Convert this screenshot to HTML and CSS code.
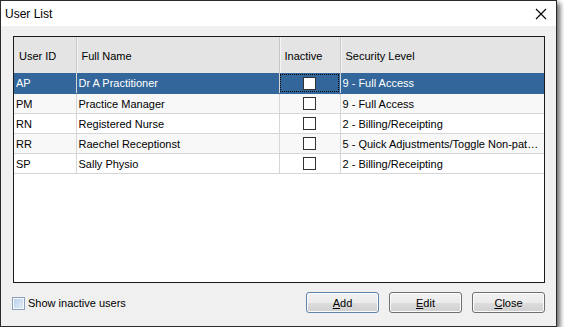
FILE: index.html
```html
<!DOCTYPE html>
<html>
<head>
    <title>User List</title>
    <link rel="stylesheet" href="styles.css">
</head>
<body>
    <div class="window">
        <div class="titlebar">
            <span class="title">User List</span>
            <span class="close-x">
                <svg width="12" height="12" viewBox="0 0 12 12"><path d="M1 1 L11 11 M11 1 L1 11" stroke="#000" stroke-width="1.1" fill="none"/></svg>
            </span>
        </div>
        <div class="content">
            <div class="grid">
                <table>
                    <colgroup>
                        <col class="c-id"><col class="c-name"><col class="c-inactive"><col class="c-level">
                    </colgroup>
                    <thead>
                        <tr>
                            <th>User ID</th>
                            <th>Full Name</th>
                            <th>Inactive</th>
                            <th>Security Level</th>
                        </tr>
                    </thead>
                    <tbody>
                        <tr class="selected">
                            <td>AP</td>
                            <td>Dr A Practitioner</td>
                            <td class="chk focus"><span class="box"></span></td>
                            <td>9 - Full Access</td>
                        </tr>
                        <tr class="alt">
                            <td>PM</td>
                            <td>Practice Manager</td>
                            <td class="chk"><span class="box"></span></td>
                            <td>9 - Full Access</td>
                        </tr>
                        <tr>
                            <td>RN</td>
                            <td>Registered Nurse</td>
                            <td class="chk"><span class="box"></span></td>
                            <td>2 - Billing/Receipting</td>
                        </tr>
                        <tr class="alt">
                            <td>RR</td>
                            <td>Raechel Receptionst</td>
                            <td class="chk"><span class="box"></span></td>
                            <td>5 - Quick Adjustments/Toggle Non-pat…</td>
                        </tr>
                        <tr>
                            <td>SP</td>
                            <td>Sally Physio</td>
                            <td class="chk"><span class="box"></span></td>
                            <td>2 - Billing/Receipting</td>
                        </tr>
                    </tbody>
                </table>
            </div>
            <div class="footer">
                <label class="show-inactive"><span class="win-check"></span>Show inactive users</label>
                <div class="buttons">
                    <button><u>A</u>dd</button>
                    <button><u>E</u>dit</button>
                    <button><u>C</u>lose</button>
                </div>
            </div>
        </div>
    </div>
</body>
</html>
```

FILE: styles.css
```css
body {
    margin: 0;
    background: #ffffff;
    font-family: 'Liberation Sans', Arial, sans-serif;
    font-size: 11px;
    color: #000;
}

.window {
    width: 557px;
    height: 327px;
    box-sizing: border-box;
    border: 1px solid #2b2b2b;
    background: #f0f0f0;
    box-shadow: 3px 3px 5px rgba(0,0,0,0.6);
    display: flex;
    flex-direction: column;
}

.titlebar {
    height: 25px;
    background: #ffffff;
    display: flex;
    align-items: center;
    justify-content: space-between;
    padding: 0 9px 0 4px;
}

.title {
    font-size: 12px;
    padding-top: 1px;
}

.close-x {
    display: flex;
    padding-top: 1px;
}

.content {
    flex: 1;
    padding: 10px 11px 0 12px;
    display: flex;
    flex-direction: column;
}

.grid {
    height: 247px;
    box-sizing: border-box;
    border: 1px solid #1a1a1a;
    background: #ffffff;
    overflow: hidden;
}

table {
    width: 100%;
    border-collapse: collapse;
    table-layout: fixed;
}

.c-id { width: 62px; }
.c-name { width: 203px; }
.c-inactive { width: 61px; }

th {
    height: 35px;
    padding: 1px 0 0 5px;
    background: #e4e4e4;
    font-weight: normal;
    text-align: left;
    border-right: 1px solid #c6c6c6;
    box-shadow: inset 1px 0 0 #f6f6f6;
}

th:first-child {
    box-shadow: none;
}

th:last-child {
    border-right: none;
}

td {
    height: 19px;
    padding: 1px 2px 0;
    box-sizing: border-box;
    border-right: 1px solid #d6d6d6;
    border-bottom: 1px solid #d6d6d6;
    white-space: nowrap;
    overflow: hidden;
}

tbody tr {
    height: 20px;
}

td:last-child {
    border-right: none;
}

tr.alt td {
    background: #f8f8f8;
}

tr.selected td {
    background: #33669a;
    color: #ffffff;
    border-bottom-color: #33669a;
}

td.chk {
    text-align: center;
    padding: 0;
}

td.focus {
    outline: 1px dotted #000;
    outline-offset: -2px;
}

.box {
    display: inline-block;
    width: 11px;
    height: 11px;
    border: 1px solid #333;
    background: #ffffff;
    vertical-align: middle;
}

.footer {
    display: flex;
    align-items: center;
    justify-content: space-between;
    margin-top: 9px;
}

.show-inactive {
    display: flex;
    align-items: center;
    gap: 3px;
    margin-left: -1px;
    margin-top: 1px;
}

.win-check {
    width: 11px;
    height: 11px;
    border: 1px solid #8aa0bb;
    background: linear-gradient(135deg, #b9cfe9, #e3eef9);
    box-shadow: inset 0 0 0 1px #f4f8fc;
}

.buttons {
    display: flex;
    gap: 10px;
}

button {
    width: 73px;
    height: 21px;
    font-family: 'Liberation Sans', Arial, sans-serif;
    font-size: 11px;
    border: 1px solid #5d85ac;
    border-radius: 3px;
    background: linear-gradient(#f2f2f2 0%, #ebebeb 50%, #dddddd 51%, #cfcfcf 100%);
    box-shadow: inset 0 0 0 1px #fcfcfc;
    padding: 0;
    color: #000;
}

.buttons button:not(:first-child) {
    border-color: #707070;
}
```
